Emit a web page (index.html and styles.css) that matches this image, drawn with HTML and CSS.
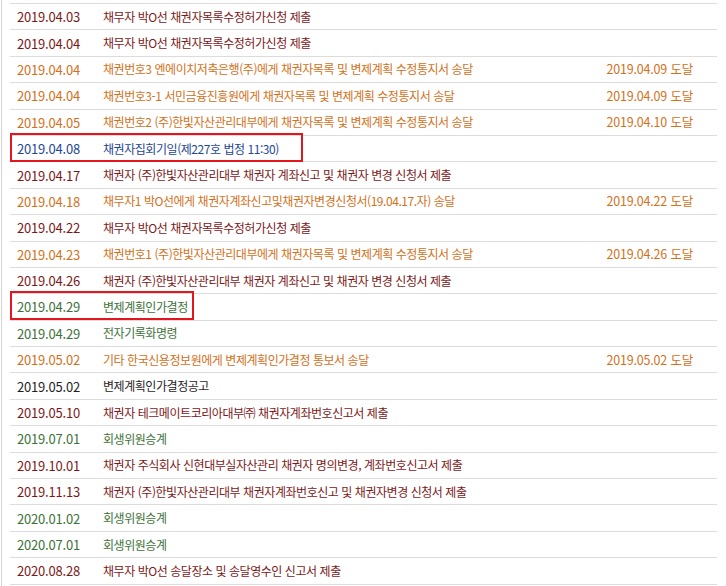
FILE: index.html
```html
<!DOCTYPE html>
<html lang="ko">
<head>
<meta charset="utf-8">
<link rel="stylesheet" href="styles.css">
</head>
<body>
<div class="frame">
  <ul class="history">
    <li class="row c-maroon"><span class="d">2019.04.03</span><span class="t">채무자 박O선 채권자목록수정허가신청 제출</span><span class="r"></span></li>
    <li class="row c-maroon"><span class="d">2019.04.04</span><span class="t">채무자 박O선 채권자목록수정허가신청 제출</span><span class="r"></span></li>
    <li class="row c-orange"><span class="d">2019.04.04</span><span class="t">채권번호3 엔에이치저축은행(주)에게 채권자목록 및 변제계획 수정통지서 송달</span><span class="r">2019.04.09 도달</span></li>
    <li class="row c-orange"><span class="d">2019.04.04</span><span class="t">채권번호3-1 서민금융진흥원에게 채권자목록 및 변제계획 수정통지서 송달</span><span class="r">2019.04.09 도달</span></li>
    <li class="row c-orange"><span class="d">2019.04.05</span><span class="t">채권번호2 (주)한빛자산관리대부에게 채권자목록 및 변제계획 수정통지서 송달</span><span class="r">2019.04.10 도달</span></li>
    <li class="row c-blue"><span class="d">2019.04.08</span><span class="t">채권자집회기일(제227호 법정 11:30)</span><span class="r"></span><i class="mark mark-1"></i></li>
    <li class="row c-maroon"><span class="d">2019.04.17</span><span class="t">채권자 (주)한빛자산관리대부 채권자 계좌신고 및 채권자 변경 신청서 제출</span><span class="r"></span></li>
    <li class="row c-orange"><span class="d">2019.04.18</span><span class="t">채무자1 박O선에게 채권자계좌신고및채권자변경신청서(19.04.17.자) 송달</span><span class="r">2019.04.22 도달</span></li>
    <li class="row c-maroon"><span class="d">2019.04.22</span><span class="t">채무자 박O선 채권자목록수정허가신청 제출</span><span class="r"></span></li>
    <li class="row c-orange"><span class="d">2019.04.23</span><span class="t">채권번호1 (주)한빛자산관리대부에게 채권자목록 및 변제계획 수정통지서 송달</span><span class="r">2019.04.26 도달</span></li>
    <li class="row c-maroon"><span class="d">2019.04.26</span><span class="t">채권자 (주)한빛자산관리대부 채권자 계좌신고 및 채권자 변경 신청서 제출</span><span class="r"></span></li>
    <li class="row c-green"><span class="d">2019.04.29</span><span class="t">변제계획인가결정</span><span class="r"></span><i class="mark mark-2"></i></li>
    <li class="row c-green"><span class="d">2019.04.29</span><span class="t">전자기록화명령</span><span class="r"></span></li>
    <li class="row c-orange"><span class="d">2019.05.02</span><span class="t">기타 한국신용정보원에게 변제계획인가결정 통보서 송달</span><span class="r">2019.05.02 도달</span></li>
    <li class="row c-black"><span class="d">2019.05.02</span><span class="t">변제계획인가결정공고</span><span class="r"></span></li>
    <li class="row c-maroon"><span class="d">2019.05.10</span><span class="t">채권자 테크메이트코리아대부㈜ 채권자계좌번호신고서 제출</span><span class="r"></span></li>
    <li class="row c-green"><span class="d">2019.07.01</span><span class="t">회생위원승계</span><span class="r"></span></li>
    <li class="row c-maroon"><span class="d">2019.10.01</span><span class="t">채권자 주식회사 신현대부실자산관리 채권자 명의변경, 계좌번호신고서 제출</span><span class="r"></span></li>
    <li class="row c-maroon"><span class="d">2019.11.13</span><span class="t">채권자 (주)한빛자산관리대부 채권자계좌번호신고 및 채권자변경 신청서 제출</span><span class="r"></span></li>
    <li class="row c-green"><span class="d">2020.01.02</span><span class="t">회생위원승계</span><span class="r"></span></li>
    <li class="row c-green"><span class="d">2020.07.01</span><span class="t">회생위원승계</span><span class="r"></span></li>
    <li class="row c-maroon"><span class="d">2020.08.28</span><span class="t">채무자 박O선 송달장소 및 송달영수인 신고서 제출</span><span class="r"></span></li>
  </ul>
</div>
</body>
</html>
```

FILE: styles.css
```css
html, body {
  margin: 0;
  padding: 0;
  background: #ffffff;
}
body {
  font-family: "Noto Sans CJK KR", "Noto Sans", sans-serif;
  font-size: 12px;
}
.frame {
  margin-left: 1px;
  border-left: 1px solid #d4d4d4;
  min-height: 586px;
  padding: 3px 0 0 8px;
  width: 707px;
}
.history {
  list-style: none;
  margin: 0;
  padding: 0;
  border-top: 1px solid #dcdcdc;
}
.row {
  position: relative;
  display: grid;
  grid-template-columns: 86px 1fr auto;
  align-items: center;
  height: 25.4px;
  border-bottom: 1px solid #dcdcdc;
  padding: 0 24px 0 7px;
  letter-spacing: -0.45px;
  line-height: 1;
}
.d {
  font-size: 13px;
  letter-spacing: -0.2px;
}
.r {
  font-size: 12.5px;
  letter-spacing: -0.2px;
}
.t {
  white-space: nowrap;
}
.c-maroon { color: #7c1818; }
.c-orange { color: #d2711a; }
.c-blue { color: #1d4796; }
.c-green { color: #3d7138; }
.c-black { color: #1e1e1e; }
.mark {
  position: absolute;
  left: 0;
  top: -3px;
  height: 29px;
  border: 2px solid #e3161e;
  box-sizing: border-box;
}
.mark-1 { width: 293px; }
.mark-2 { width: 184px; }
```
